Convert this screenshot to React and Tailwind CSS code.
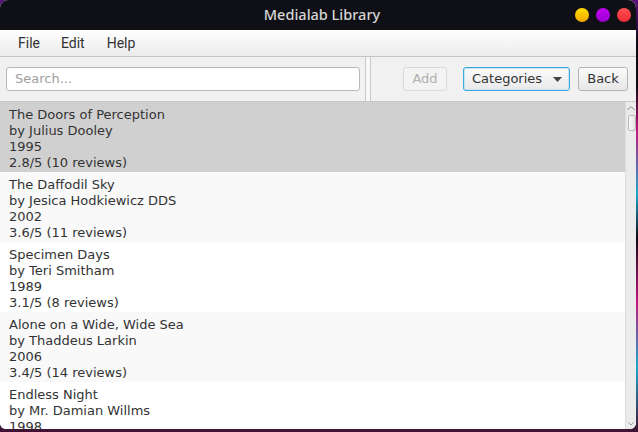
import React from "react";

const books = [
  ["The Doors of Perception", "Julius Dooley", "1995", "2.8/5 (10 reviews)"],
  ["The Daffodil Sky", "Jesica Hodkiewicz DDS", "2002", "3.6/5 (11 reviews)"],
  ["Specimen Days", "Teri Smitham", "1989", "3.1/5 (8 reviews)"],
  ["Alone on a Wide, Wide Sea", "Thaddeus Larkin", "2006", "3.4/5 (14 reviews)"],
  ["Endless Night", "Mr. Damian Willms", "1998", "3.9/5 (9 reviews)"],
];

const rowBg = ["bg-[#d0d0d0]", "bg-[#f9f9f9]", "bg-white", "bg-[#f9f9f9]", "bg-white"];

export default function App() {
  return (
    <div className="w-[638px] h-[432px] overflow-hidden bg-[linear-gradient(180deg,#5a1080_0%,#0c0a14_10%,#0c0a14_20%,#c01880_30%,#1aa8d0_45%,#0c0a14_55%,#c01880_70%,#1aa8d0_85%,#401030_100%)] flex">
      <div className="w-[636px] h-[429px] flex flex-col rounded-t-[8px] rounded-b-[6px] overflow-hidden bg-white">
        {/* Title bar */}
        <div className="h-[30px] shrink-0 bg-[#0f1015] grid grid-cols-[1fr_auto_1fr] items-center">
          <div />
          <div className="text-[14.5px] text-[#d6d6d6] font-medium pl-[8px]" style={{ fontFamily: "'Noto Sans', sans-serif" }}>
            Medialab Library
          </div>
          <div className="flex justify-end items-center gap-[7px] pr-[5px]">
            <div className="w-[14px] h-[14px] rounded-full bg-gradient-to-b from-[#ffe000] to-[#f0a800]" />
            <div className="w-[14px] h-[14px] rounded-full bg-gradient-to-b from-[#c000f0] to-[#9a00d0]" />
            <div className="w-[14px] h-[14px] rounded-full bg-gradient-to-b from-[#ff5050] to-[#f02838]" />
          </div>
        </div>
        {/* Menu bar */}
        <div className="h-[27px] shrink-0 bg-gradient-to-b from-white to-[#ebebeb] border-b border-[#c6c6c6] flex items-center text-[14px] text-[#333]" style={{ fontFamily: "Roboto, 'Noto Sans', sans-serif" }}>
          <span className="ml-[18px]">File</span>
          <span className="ml-[21px]">Edit</span>
          <span className="ml-[22px]">Help</span>
        </div>
        {/* Toolbar */}
        <div className="h-[45px] shrink-0 bg-[#f1f1f1] border-b border-[#c8c8c8] flex text-[13px]" style={{ fontFamily: "'DejaVu Sans', sans-serif" }}>
          <div className="w-[365px] flex items-center pl-[6px]">
            <div className="w-[354px] h-[24px] bg-white border border-[#b8b8b8] rounded-[3px] flex items-center pl-[8px] text-[#a0a0a0]">
              Search...
            </div>
          </div>
          <div className="w-[6px] border-x border-[#c9c9c9] bg-[#f8f8f8]" />
          <div className="flex-1 flex items-center justify-end pr-[8px]">
            <div className="w-[44px] h-[24px] border border-[#dadada] rounded-[3px] bg-[#f3f3f3] text-[#b0b0b0] flex items-center justify-center">Add</div>
            <div className="ml-[16px] w-[107px] h-[24px] border border-[#3ea6dc] rounded-[3px] bg-gradient-to-b from-[#fbfbfb] to-[#e9e9e9] text-[#333] flex items-center pl-[8px] shadow-[inset_0_0_0_1px_#c6e4f4]">
              <span>Categories</span>
              <svg width="9" height="5" viewBox="0 0 9 5" className="ml-[11px]">
                <path d="M0 0 L9 0 L4.5 5 Z" fill="#444" />
              </svg>
            </div>
            <div className="ml-[8px] w-[50px] h-[24px] border border-[#b4b4b4] rounded-[3px] bg-gradient-to-b from-[#fbfbfb] to-[#e7e7e7] text-[#333] flex items-center justify-center">Back</div>
          </div>
        </div>
        {/* List */}
        <div className="flex-1 flex min-h-0">
          <div className="flex-1 overflow-hidden text-[13px] leading-[16px] text-[#333]" style={{ fontFamily: "'DejaVu Sans', sans-serif" }}>
            {books.map((b, i) => (
              <div key={i} className={`${rowBg[i]} h-[70px] pl-[9px] pt-[5px]`}>
                <div>{b[0]}</div>
                <div>by {b[1]}</div>
                <div>{b[2]}</div>
                <div>{b[3]}</div>
              </div>
            ))}
          </div>
          <div className="w-[11px] bg-[#ebebeb] border-l border-[#dcdcdc] flex flex-col items-center">
            <svg width="8" height="6" viewBox="0 0 8 6" className="mt-[3px]">
              <path d="M0.5 5 L4 1.5 L7.5 5" fill="none" stroke="#888" strokeWidth="1" />
            </svg>
            <div className="mt-[4px] ml-[2px] w-[8px] h-[16px] rounded-[2px] bg-gradient-to-r from-[#fafafa] to-[#e6e6e6] border border-[#b8b8b8]" />
            <div className="flex-1" />
            <svg width="6" height="4" viewBox="0 0 6 4" className="mb-[3px]">
              <path d="M0.5 0.5 L3 3 L5.5 0.5" fill="none" stroke="#999" strokeWidth="1" />
            </svg>
          </div>
        </div>
      </div>
    </div>
  );
}
